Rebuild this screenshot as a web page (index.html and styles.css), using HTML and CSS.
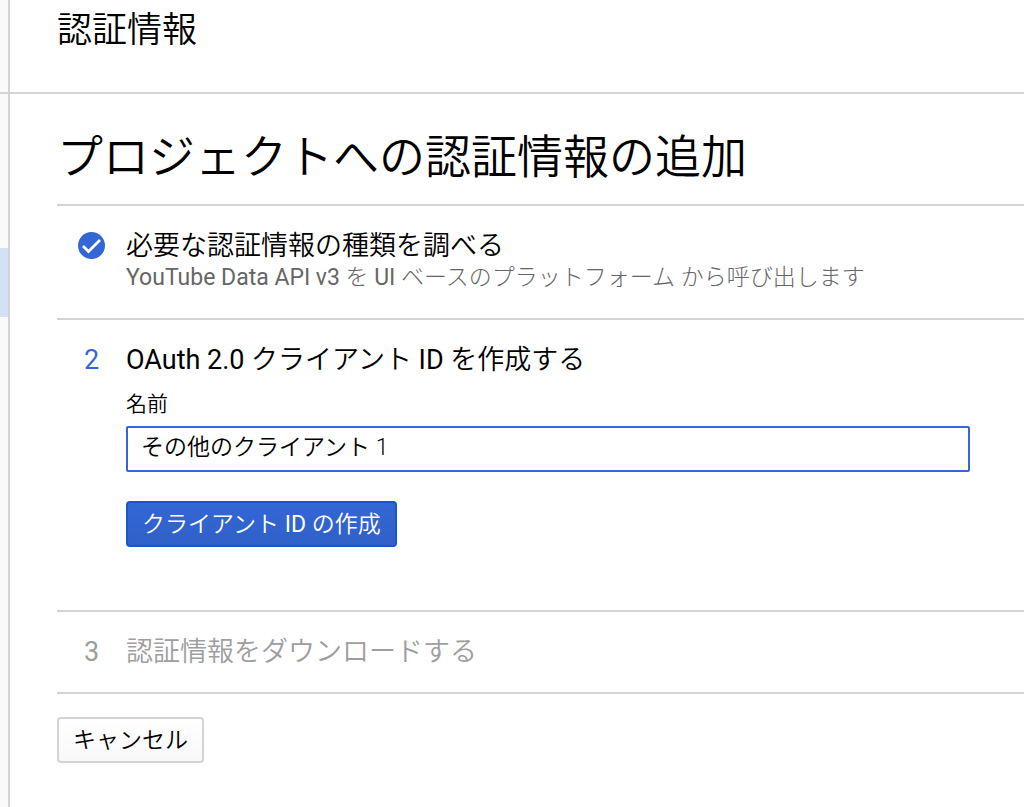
FILE: index.html
```html
<!DOCTYPE html>
<html lang="ja">
<head>
    <meta charset="UTF-8">
    <meta name="viewport" content="width=device-width, initial-scale=1.0">
    <title>認証情報</title>
    <link rel="stylesheet" href="styles.css">
</head>
<body>
    <div class="sidebar">
        <div class="sidebar-top"></div>
        <div class="sidebar-active"></div>
    </div>

    <div class="page">
        <header class="page-header">認証情報</header>

        <main class="content">
            <h1>プロジェクトへの認証情報の追加</h1>

            <section class="step">
                <div class="step-mark">
                    <svg class="check" viewBox="0 0 28 28" aria-hidden="true">
                        <circle cx="13.5" cy="13.5" r="13.5" fill="#3367d6"/>
                        <path d="M5 14 L10.5 19.5 L22 8" fill="none" stroke="#fff" stroke-width="2.8"/>
                    </svg>
                </div>
                <div class="step-body">
                    <h2>必要な認証情報の種類を調べる</h2>
                    <p class="summary"><span class="latin">YouTube Data API v3</span> を <span class="latin">UI</span> ベースのプラットフォーム から呼び出します</p>
                </div>
            </section>

            <section class="step current">
                <div class="step-mark">2</div>
                <form class="step-body">
                    <h2><span class="latin">OAuth 2.0</span> クライアント <span class="latin">ID</span> を作成する</h2>
                    <label for="clientName">名前</label>
                    <input type="text" id="clientName" value="その他のクライアント 1">
                    <button type="button" class="primary">クライアント <span class="latin">ID</span> の作成</button>
                </form>
            </section>

            <section class="step disabled">
                <div class="step-mark">3</div>
                <div class="step-body">
                    <h2>認証情報をダウンロードする</h2>
                </div>
            </section>

            <div class="footer">
                <button type="button">キャンセル</button>
            </div>
        </main>
    </div>
</body>
</html>
```
FILE: styles.css
```css
* {
    box-sizing: border-box;
}
body {
    display: flex;
    min-height: 100vh;
    margin: 0;
    background-color: #fff;
    color: #000;
    font-family: Roboto, "Noto Sans CJK JP", sans-serif;
    font-size: 23px;
    font-weight: 350;
}
.sidebar {
    flex: none;
    width: 10px;
    background-color: #fafafa;
    border-right: 2px solid #d4d4d4;
}
.sidebar-top {
    height: 94px;
    margin-bottom: 154px;
    border-bottom: 2px solid #d4d4d4;
}
.sidebar-active {
    height: 69px;
    background-color: #d3e0f7;
}
.page {
    flex: 1;
    min-width: 0;
}
.page-header {
    height: 94px;
    padding-left: 47px;
    border-bottom: 2px solid #d4d4d4;
    font-size: 35px;
    line-height: 62px;
}
.content {
    padding-left: 47px;
}
h1 {
    margin: 0;
    font-size: 46px;
    font-weight: 350;
    line-height: 70px;
    padding: 28px 0 12px;
}
.step {
    display: flex;
    padding: 24px 0;
    border-top: 2px solid #d4d4d4;
}
.step-mark {
    flex: none;
    width: 69px;
    text-align: center;
    font-size: 27px;
    font-weight: 400;
    line-height: 32px;
}
.check {
    display: block;
    width: 28px;
    height: 28px;
    margin: 2px auto;
}
.step-body {
    flex: 1;
}
h2 {
    margin: 0;
    font-size: 27px;
    font-weight: 350;
    line-height: 32px;
}
.summary {
    margin: 0;
    color: #666;
    font-weight: 300;
    line-height: 32px;
}
.latin {
    font-weight: 400;
}
.current {
    padding-bottom: 63px;
}
.current .step-mark {
    color: #3367d6;
}
.disabled {
    border-bottom: 2px solid #d4d4d4;
    color: #9e9e9e;
}
label {
    display: block;
    margin: 12px 0 6px;
    font-size: 21px;
    line-height: 32px;
}
input {
    display: block;
    width: calc(100% - 54px);
    height: 46px;
    margin-bottom: 29px;
    padding: 0 13px 8px;
    border: 2px solid #3367d6;
    border-radius: 2px;
    outline: none;
    font: inherit;
}
button {
    height: 46px;
    padding: 0 14px 4px;
    border: 2px solid #d4d4d4;
    border-radius: 4px;
    background: linear-gradient(#fff, #f8f8f8);
    color: #000;
    font: inherit;
    cursor: pointer;
}
.primary {
    border-color: #1a55cc;
    background: linear-gradient(#3367d6, #3060c8);
    color: #fff;
}
.footer {
    padding: 23px 0;
}
```
